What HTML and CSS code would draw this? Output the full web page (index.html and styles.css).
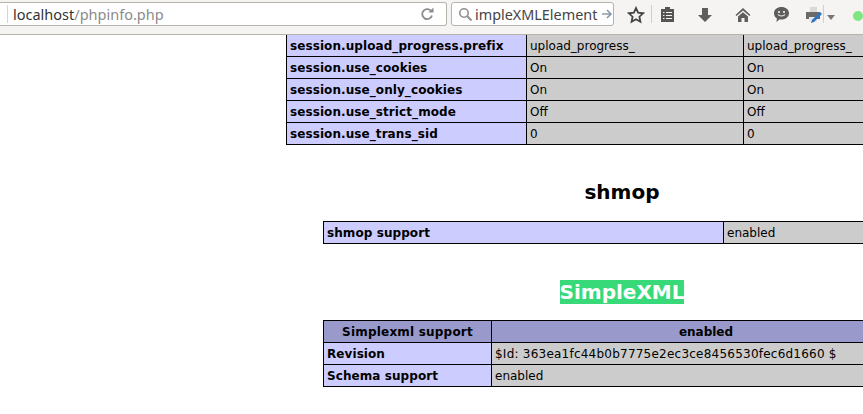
FILE: index.html
```html
<!DOCTYPE html>
<html lang="en">
<head>
  <meta charset="UTF-8">
  <title>phpinfo()</title>
  <link rel="stylesheet" href="styles.css">
</head>
<body>
  <div class="toolbar">
    <div class="url-bar">
      <span class="url-text">localhost<span class="url-path">/phpinfo.php</span></span>
      <svg class="reload" width="16" height="16" viewBox="0 0 16 16"><path d="M12.500 5.500A5 5 0 1 0 13 9.500" fill="none" stroke="#8a8a8a" stroke-width="1.800"/><path d="M9.500 6.500h5v-5z" fill="#8a8a8a"/></svg>
    </div>
    <div class="search-bar">
      <svg class="search-icon" width="15" height="15" viewBox="0 0 15 15"><circle cx="6" cy="6" r="4.200" fill="none" stroke="#8f8f8f" stroke-width="1.600"/><path d="M9.200 9.200l4.300 4.300" stroke="#8f8f8f" stroke-width="2"/></svg>
      <span class="search-text">impleXMLElement</span>
      <svg class="search-go" width="12" height="12" viewBox="0 0 12 12"><path d="M1 6h9M6 2l4 4-4 4" fill="none" stroke="#8a9aa8" stroke-width="1.600"/></svg>
    </div>
    <svg class="star" width="18" height="18" viewBox="0 0 18 18"><path d="M9 2l2.100 4.700 5 .6-3.700 3.400 1 5L9 13.200l-4.400 2.500 1-5L1.900 7.300l5-.6z" fill="none" stroke="#444" stroke-width="1.800"/></svg>
    <span class="divider"></span>
    <svg class="clip" width="15" height="16" viewBox="0 0 15 16"><path d="M1 3h4V1h5v2h4v13H1z" fill="#555"/><path d="M3 6.500h1.500M6 6.500h6M3 9.500h1.500M6 9.500h6M3 12.500h1.500M6 12.500h6" stroke="#f5f4f2" stroke-width="1.200"/></svg>
    <svg class="down" width="16" height="16" viewBox="0 0 16 16"><path d="M5 1h6v7h4l-7 7-7-7h4z" fill="#5e5e5e"/></svg>
    <svg class="home" width="16" height="16" viewBox="0 0 16 16"><path d="M8 1L0.500 8l1 1L8 3.500 14.500 9l1-1z" fill="#5e5e5e"/><path d="M3 9.500L8 5.200l5 4.300V15h-3.500v-4h-3v4H3z" fill="#5e5e5e"/></svg>
    <svg class="chat" width="17" height="17" viewBox="0 0 17 17"><path d="M8.500 1C12.600 1 16 3.500 16 7.200s-3.400 6.300-7.500 6.300c-.6 0-1.200 0-1.700-.2L3.500 16l.4-3.700C2 11.200 1 9.400 1 7.200 1 3.500 4.400 1 8.500 1z" fill="#5e5e5e"/><circle cx="6" cy="6" r="1.100" fill="#f5f4f2"/><circle cx="11" cy="6" r="1.100" fill="#f5f4f2"/><path d="M5 8.500c1.500 2 5.500 2 7 0" fill="none" stroke="#f5f4f2" stroke-width="1.200"/></svg>
    <svg class="printer" width="18" height="18" viewBox="0 0 18 18"><path d="M5 1h7v5H5z" fill="#d8d8d8"/><path d="M1 6h14v7H1z" fill="#6a6a6a"/><path d="M4 11h8v5H4z" fill="#e6e6e6"/><path d="M7 14l8-8 2 2-8 8-3 1z" fill="#2f74c0"/></svg>
    <span class="divider divider-short"></span>
    <span class="caret"></span>
    <span class="status-dot"></span>
  </div>
  <div class="page">
    <div class="center">
      <table class="info-table wide">
        <tr><td class="key">session.upload_progress.prefix</td><td class="val col-local">upload_progress_</td><td class="val">upload_progress_</td></tr>
        <tr><td class="key">session.use_cookies</td><td class="val">On</td><td class="val">On</td></tr>
        <tr><td class="key">session.use_only_cookies</td><td class="val">On</td><td class="val">On</td></tr>
        <tr><td class="key">session.use_strict_mode</td><td class="val">Off</td><td class="val">Off</td></tr>
        <tr><td class="key">session.use_trans_sid</td><td class="val">0</td><td class="val">0</td></tr>
      </table>

      <h2 class="module-title first">shmop</h2>
      <table class="info-table narrow">
        <tr><td class="key key-shmop">shmop support</td><td class="val">enabled</td></tr>
      </table>

      <h2 class="module-title second"><span class="selected">SimpleXML</span></h2>
      <table class="info-table narrow">
        <tr class="head"><th class="key-xml">Simplexml support</th><th>enabled</th></tr>
        <tr><td class="key">Revision</td><td class="val revision">$Id: 363ea1fc44b0b7775e2ec3ce8456530fec6d1660 $</td></tr>
        <tr><td class="key">Schema support</td><td class="val">enabled</td></tr>
      </table>
    </div>
  </div>
</body>
</html>
```

FILE: styles.css
```css
html, body {
  margin: 0;
  height: 414px;
  overflow: hidden;
  background-color: #fff;
}
body {
  font-family: "DejaVu Sans", sans-serif;
  color: #000;
}
.toolbar {
  display: flex;
  align-items: flex-start;
  height: 32px;
  padding-top: 2px;
  background-color: #f5f4f2;
  border-bottom: 1px solid #b5b3ab;
}
.url-bar {
  display: flex;
  flex: none;
  align-items: center;
  justify-content: space-between;
  width: 447px;
  height: 24px;
  box-sizing: border-box;
  background-color: #fff;
  border: 1px solid #b5b3ab;
  border-left: none;
  border-radius: 0 3px 3px 0;
  padding: 0 11px 0 13px;
  position: relative;
}
.url-bar::before {
  content: "";
  position: absolute;
  left: 7px;
  top: 2px;
  bottom: 2px;
  width: 1px;
  background-color: #d5d5d5;
}
.url-text {
  font-family: "Noto Sans", sans-serif;
  font-size: 14.5px;
  color: #333;
}
.url-path {
  color: #8c8c8c;
}
.search-bar {
  display: flex;
  flex: none;
  align-items: center;
  width: 163px;
  height: 24px;
  box-sizing: border-box;
  margin-left: 4px;
  padding: 0 3px 0 6px;
  background-color: #fff;
  border: 1px solid #b5b3ab;
  border-radius: 3px;
}
.search-icon { flex: none; }
.search-go { flex: none; margin-left: 4px; }
.search-text {
  margin-left: 2px;
  font-family: "Noto Sans", sans-serif;
  font-size: 14.4px;
  color: #444;
  white-space: nowrap;
}
.star {
  margin: 4px 0 0 13px;
  flex: none;
}
.divider {
  width: 1px;
  height: 18px;
  margin: 3px 0 0 6px;
  background-color: #d0cfcb;
  flex: none;
}
.divider-short {
  margin: 3px 0 0 0;
}
.clip { margin: 4px 0 0 8px; flex: none; }
.down { margin: 5px 0 0 22px; flex: none; }
.home { margin: 5px 0 0 22px; flex: none; }
.chat { margin: 4px 0 0 22px; flex: none; }
.printer { margin: 4px 0 0 15px; flex: none; }
.caret {
  width: 0;
  height: 0;
  margin: 13px 0 0 3px;
  border: 4px solid transparent;
  border-top: 5px solid #777;
  border-bottom: none;
  flex: none;
}
.status-dot {
  width: 10px;
  height: 10px;
  margin: 9px 0 0 18px;
  border-radius: 50%;
  background-color: #7fe67f;
  flex: none;
}
.page {
  overflow: hidden;
  margin-left: 286px;
}
.center {
  width: 672px;
  text-align: center;
}
.info-table {
  border-collapse: collapse;
  font-size: 12px;
  text-align: left;
  table-layout: fixed;
}
.info-table td, .info-table th {
  border: 1px solid #000;
  height: 22px;
  padding: 0 3px;
  box-sizing: border-box;
  white-space: nowrap;
}
.wide { width: 672px; margin-top: -1px; }
.narrow { width: 598px; margin-left: 37px; }
.key {
  background-color: #ccf;
  font-weight: bold;
  letter-spacing: 0.08px;
  width: 240px;
}
.key-shmop { width: 400px; }
.key-xml { width: 168px; }
.col-local { width: 217px; }
.val { background-color: #ccc; }
.revision { letter-spacing: 0.23px; }
.head th {
  background-color: #99c;
  text-align: center;
}
.head .key-xml { letter-spacing: 0.2px; }
.module-title {
  margin: 0;
  font-size: 20px;
  line-height: 24px;
  padding-bottom: 17px;
}
.module-title.first {
  padding-top: 35px;
}
.module-title.second {
  padding-top: 36px;
  padding-bottom: 16px;
}
.selected {
  display: inline-block;
  background-color: #38d978;
  color: #fff;
}
```
